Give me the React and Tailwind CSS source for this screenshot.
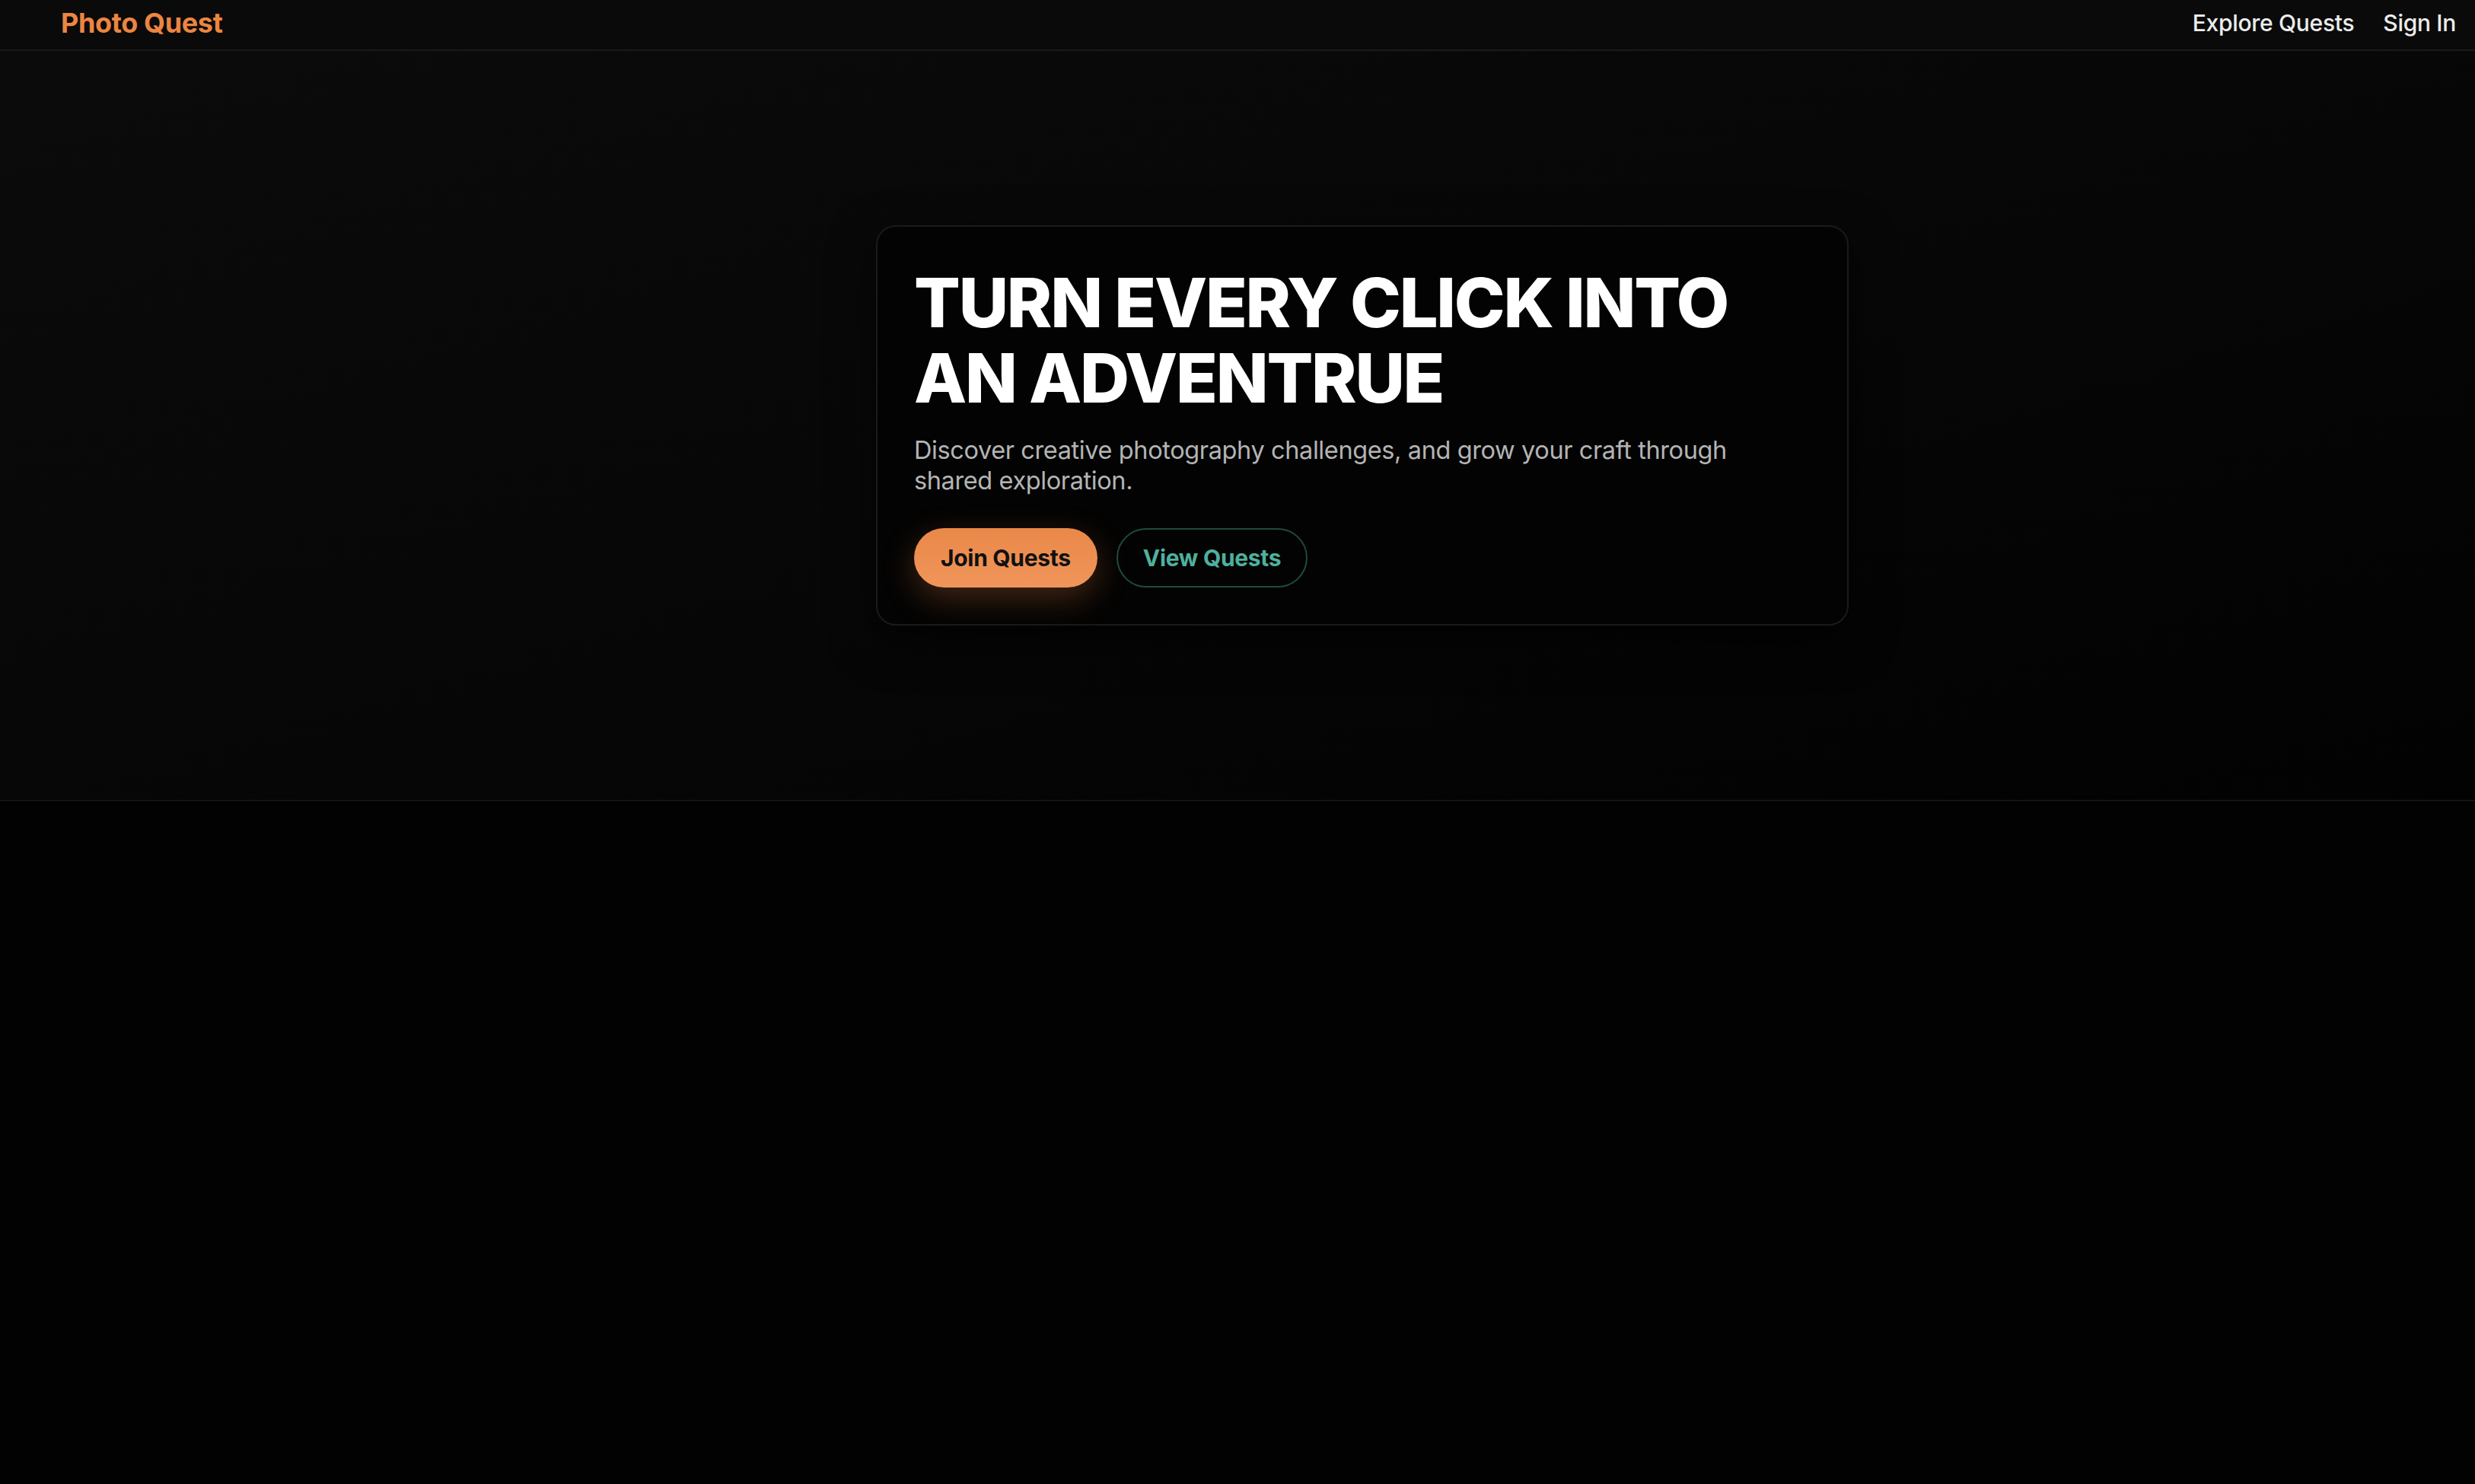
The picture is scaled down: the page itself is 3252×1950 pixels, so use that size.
function Navbar() {
  return (
    <nav className="h-[67px] bg-[#0a0a0a] border-b-2 border-[#1a1a1a] pl-[80px] pr-[25px] pb-[6px] flex items-center justify-between">
      <a href="#" className="text-[#ec8542] font-bold text-[36px] leading-none tracking-[-0.01em]">Photo Quest</a>
      <div className="flex items-center gap-[38px] text-[30px] font-medium text-[#ececec] leading-none tracking-[-0.01em]">
        <a href="#">Explore Quests</a>
        <a href="#">Sign In</a>
      </div>
    </nav>
  );
}

function Hero() {
  return (
    <section className="bg-gradient-to-br from-[#0b0b0b] via-[#070707] to-[#020202] border-b-2 border-[#141414] py-[229px] flex justify-center">
      <div className="w-[328px]" />
      <div className="w-[1278px] rounded-[26px] border-2 border-[#1a1a1a] bg-[#030303] shadow-[0_20px_60px_rgba(0,0,0,0.6)] px-[48px] pt-[50px] pb-[48px]">
        <h1 className="text-white font-extrabold text-[90px] leading-[99px] tracking-[-0.025em]">
          TURN EVERY CLICK INTO AN ADVENTRUE
        </h1>
        <p className="mt-[26px] text-[32.5px] leading-[40px] text-[#b4b4b4] tracking-[-0.012em]">
          Discover creative photography challenges, and grow your craft through shared exploration.
        </p>
        <div className="mt-[42px] flex items-center gap-[25px]">
          <button className="h-[78px] px-[35px] rounded-full bg-gradient-to-b from-[#ea8848] to-[#f0955b] text-[#111111] font-bold text-[30px] tracking-[-0.01em] shadow-[0_14px_44px_rgba(236,133,66,0.28)]">
            Join Quests
          </button>
          <button className="h-[78px] px-[33px] rounded-full border-2 border-[#1e4a41] text-[#4fb09d] font-bold text-[30px] tracking-[-0.01em]">
            View Quests
          </button>
        </div>
      </div>
    </section>
  );
}

export default function App() {
  return (
    <div className="min-h-[1950px] bg-[#020202] font-['Inter',sans-serif]">
      <Navbar />
      <Hero />
    </div>
  );
}
